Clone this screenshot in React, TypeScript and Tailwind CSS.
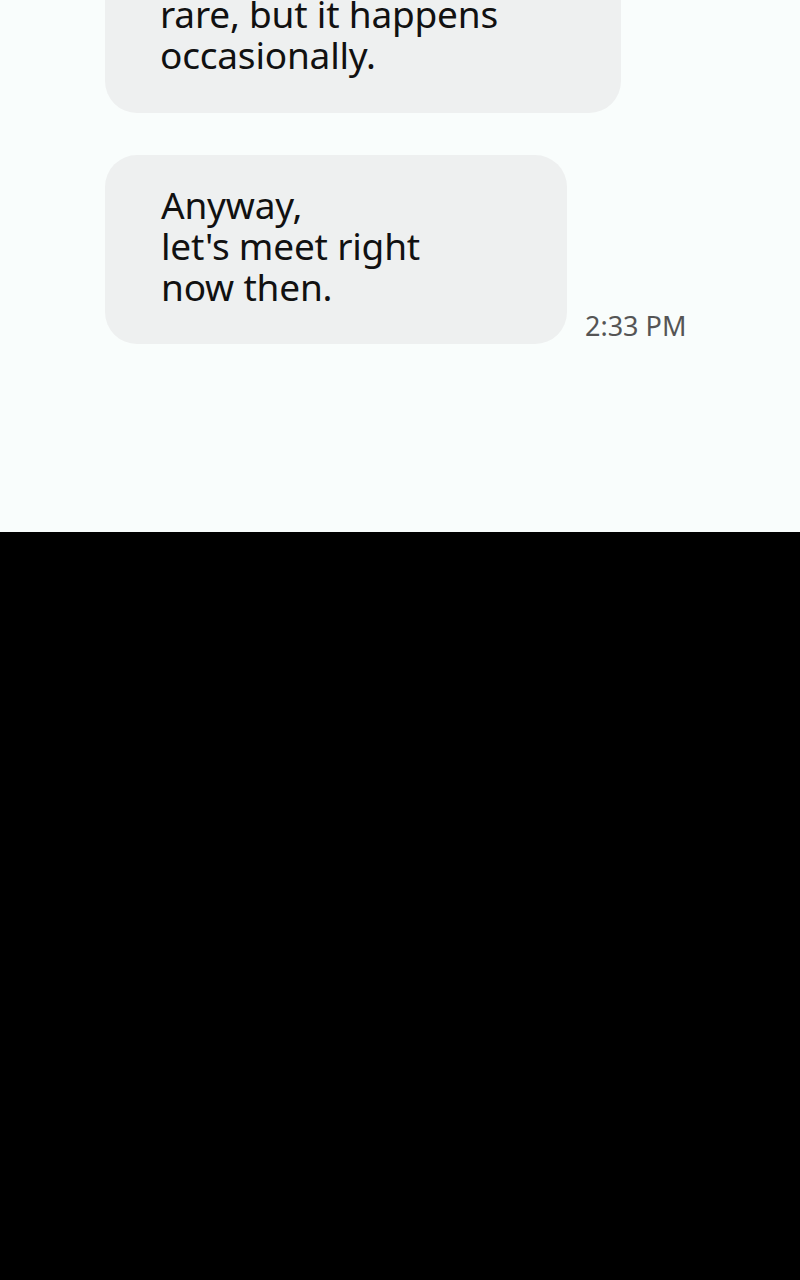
export default function App() {
  return (
    <div className="flex h-[1280px] w-[800px] flex-col" style={{ fontFamily: '"Noto Sans", "Noto Sans CJK KR", sans-serif' }}>
      {/* chat area */}
      <div className="flex h-[532px] flex-col bg-[#f9fdfc] pl-[105px]">
        <div className="w-[516px] rounded-b-[32px] bg-[#eef0f0] pb-[38px] pl-[55px] text-[37px] leading-[41px] tracking-[-0.2px] text-[#111]">
          <p className="-mt-[7px]">rare, but it happens</p>
          <p>occasionally.</p>
        </div>

        <div className="mt-[42px] flex items-end">
          <div className="h-[189px] w-[462px] rounded-[32px] bg-[#eef0f0] pl-[56px] pt-[29px] text-[37px] leading-[41px] tracking-[-0.2px] text-[#111]">
            <p>Anyway,</p>
            <p>let's meet right</p>
            <p>now then.</p>
          </div>
          <span className="-mb-[2px] ml-[18px] text-[27px] text-[#555]">2:33 PM</span>
        </div>
      </div>

      <div className="flex-1 bg-black" />
    </div>
  );
}
